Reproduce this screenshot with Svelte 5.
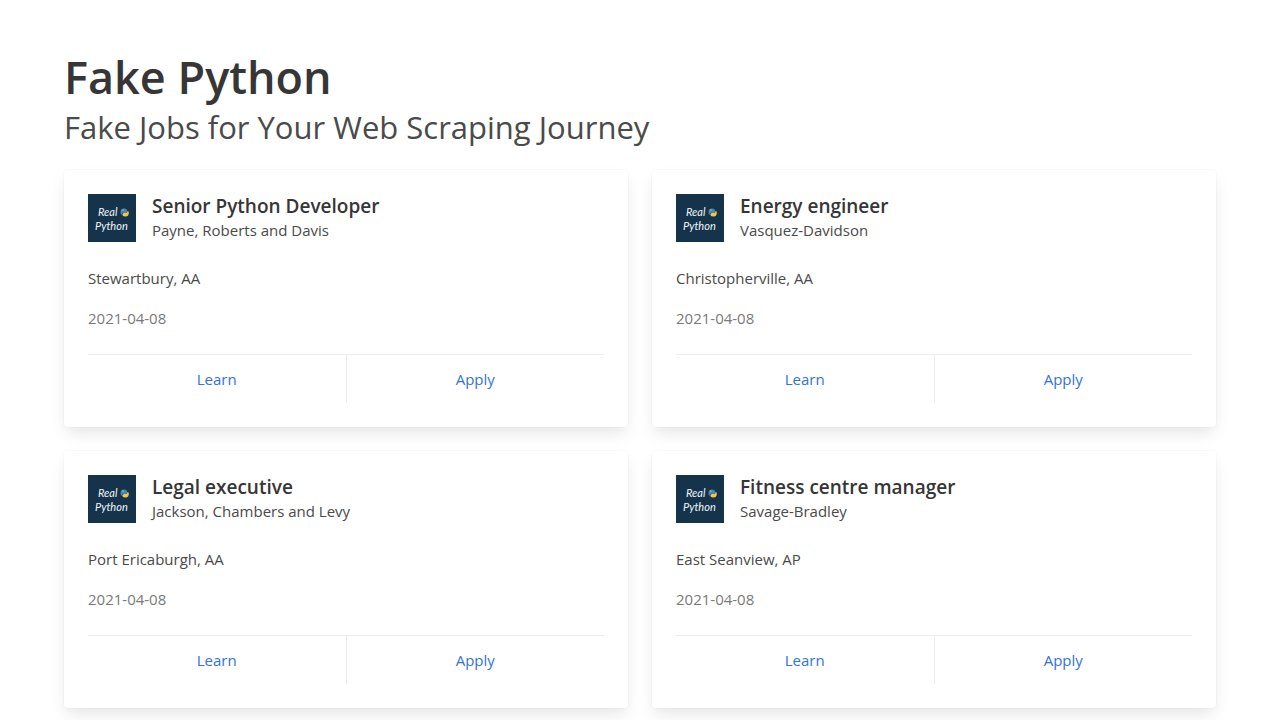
<script>
  const jobs = [
    { title: 'Senior Python Developer', company: 'Payne, Roberts and Davis', location: 'Stewartbury, AA', date: '2021-04-08' },
    { title: 'Energy engineer', company: 'Vasquez-Davidson', location: 'Christopherville, AA', date: '2021-04-08' },
    { title: 'Legal executive', company: 'Jackson, Chambers and Levy', location: 'Port Ericaburgh, AA', date: '2021-04-08' },
    { title: 'Fitness centre manager', company: 'Savage-Bradley', location: 'East Seanview, AP', date: '2021-04-08' }
  ];
</script>

<section class="section">
  <header class="heading">
    <h1>Fake Python</h1>
    <p class="tagline">Fake Jobs for Your Web Scraping Journey</p>
  </header>

  <main class="jobs">
    {#each jobs as job}
      <article class="card">
        <div class="media">
          <svg class="logo" viewBox="0 0 48 48" role="img" aria-label="Real Python Logo">
            <rect width="48" height="48" fill="#15344c" />
            <g class="lettering">
              <text x="10" y="22">Real</text>
              <text x="7" y="36">Python</text>
            </g>
            <path d="M32.5 18c0-2.600 1.300-3.600 3.500-3.600s3.200 1 3.200 2.400c0 1.500-1 2-3 2h-1.200c-1.200 0-1.200 1.900-1.200 1.900-1 0-1.300-1.200-1.300-2.700z" fill="#4787b5" />
            <path d="M40.700 17.800c.5 3-.6 4.600-3.200 4.800-2.200.1-3.100-.8-3.100-2 0-1.400 1-1.800 3-1.800h.8c1.200 0 1.300-1.900 1.300-1.900.7 0 1 .3 1.200.9z" fill="#edc84b" />
            <circle cx="35" cy="16" r=".5" fill="#fff" />
          </svg>
          <div>
            <h2>{job.title}</h2>
            <h3>{job.company}</h3>
          </div>
        </div>
        <div class="details">
          <p>{job.location}</p>
          <p><time datetime={job.date}>{job.date}</time></p>
        </div>
        <footer>
          <a href="#learn">Learn</a>
          <a href="#apply">Apply</a>
        </footer>
      </article>
    {/each}
  </main>
</section>

<style>
  :global(body) {
    margin: 0;
    background: #fff;
    color: #4a4a4a;
    font: 15px/24px "Segoe UI", "Open Sans", "Noto Sans", sans-serif;
  }
  h1, h2, h3, p {
    margin: 0;
  }
  .section {
    padding: 48px 64px;
  }
  .heading {
    margin-bottom: 22px;
  }
  h1 {
    color: #363636;
    font-size: 45px;
    font-weight: 600;
    line-height: 58px;
  }
  .tagline {
    font-size: 31px;
    font-weight: 400;
    line-height: 42px;
  }
  .jobs {
    display: grid;
    grid-template-columns: repeat(2, minmax(0, 1fr));
    gap: 24px;
  }
  .card {
    padding: 24px;
    border-radius: 4px;
    background: #fff;
    box-shadow: 0 8px 16px -2px rgba(10, 10, 10, 0.1), 0 0 0 1px rgba(10, 10, 10, 0.02);
  }
  .media {
    display: flex;
    gap: 16px;
    margin-bottom: 24px;
  }
  .logo {
    flex: none;
    width: 48px;
    height: 48px;
  }
  .lettering {
    fill: #f1f5f7;
    font-family: Lato, sans-serif;
    font-size: 11px;
    font-style: italic;
  }
  h2 {
    color: #363636;
    font-size: 19px;
    font-weight: 600;
    line-height: 24px;
  }
  h3 {
    font-size: 15px;
    font-weight: 400;
    line-height: 24px;
  }
  .details {
    display: grid;
    gap: 16px;
    margin-bottom: 24px;
  }
  time {
    color: #7a7a7a;
  }
  footer {
    display: flex;
    border-top: 1px solid #ededed;
  }
  a {
    flex: 1;
    padding: 12px;
    color: #3273dc;
    text-align: center;
    text-decoration: none;
  }
  a:hover {
    color: #363636;
  }
  a + a {
    border-left: 1px solid #ededed;
  }
</style>
